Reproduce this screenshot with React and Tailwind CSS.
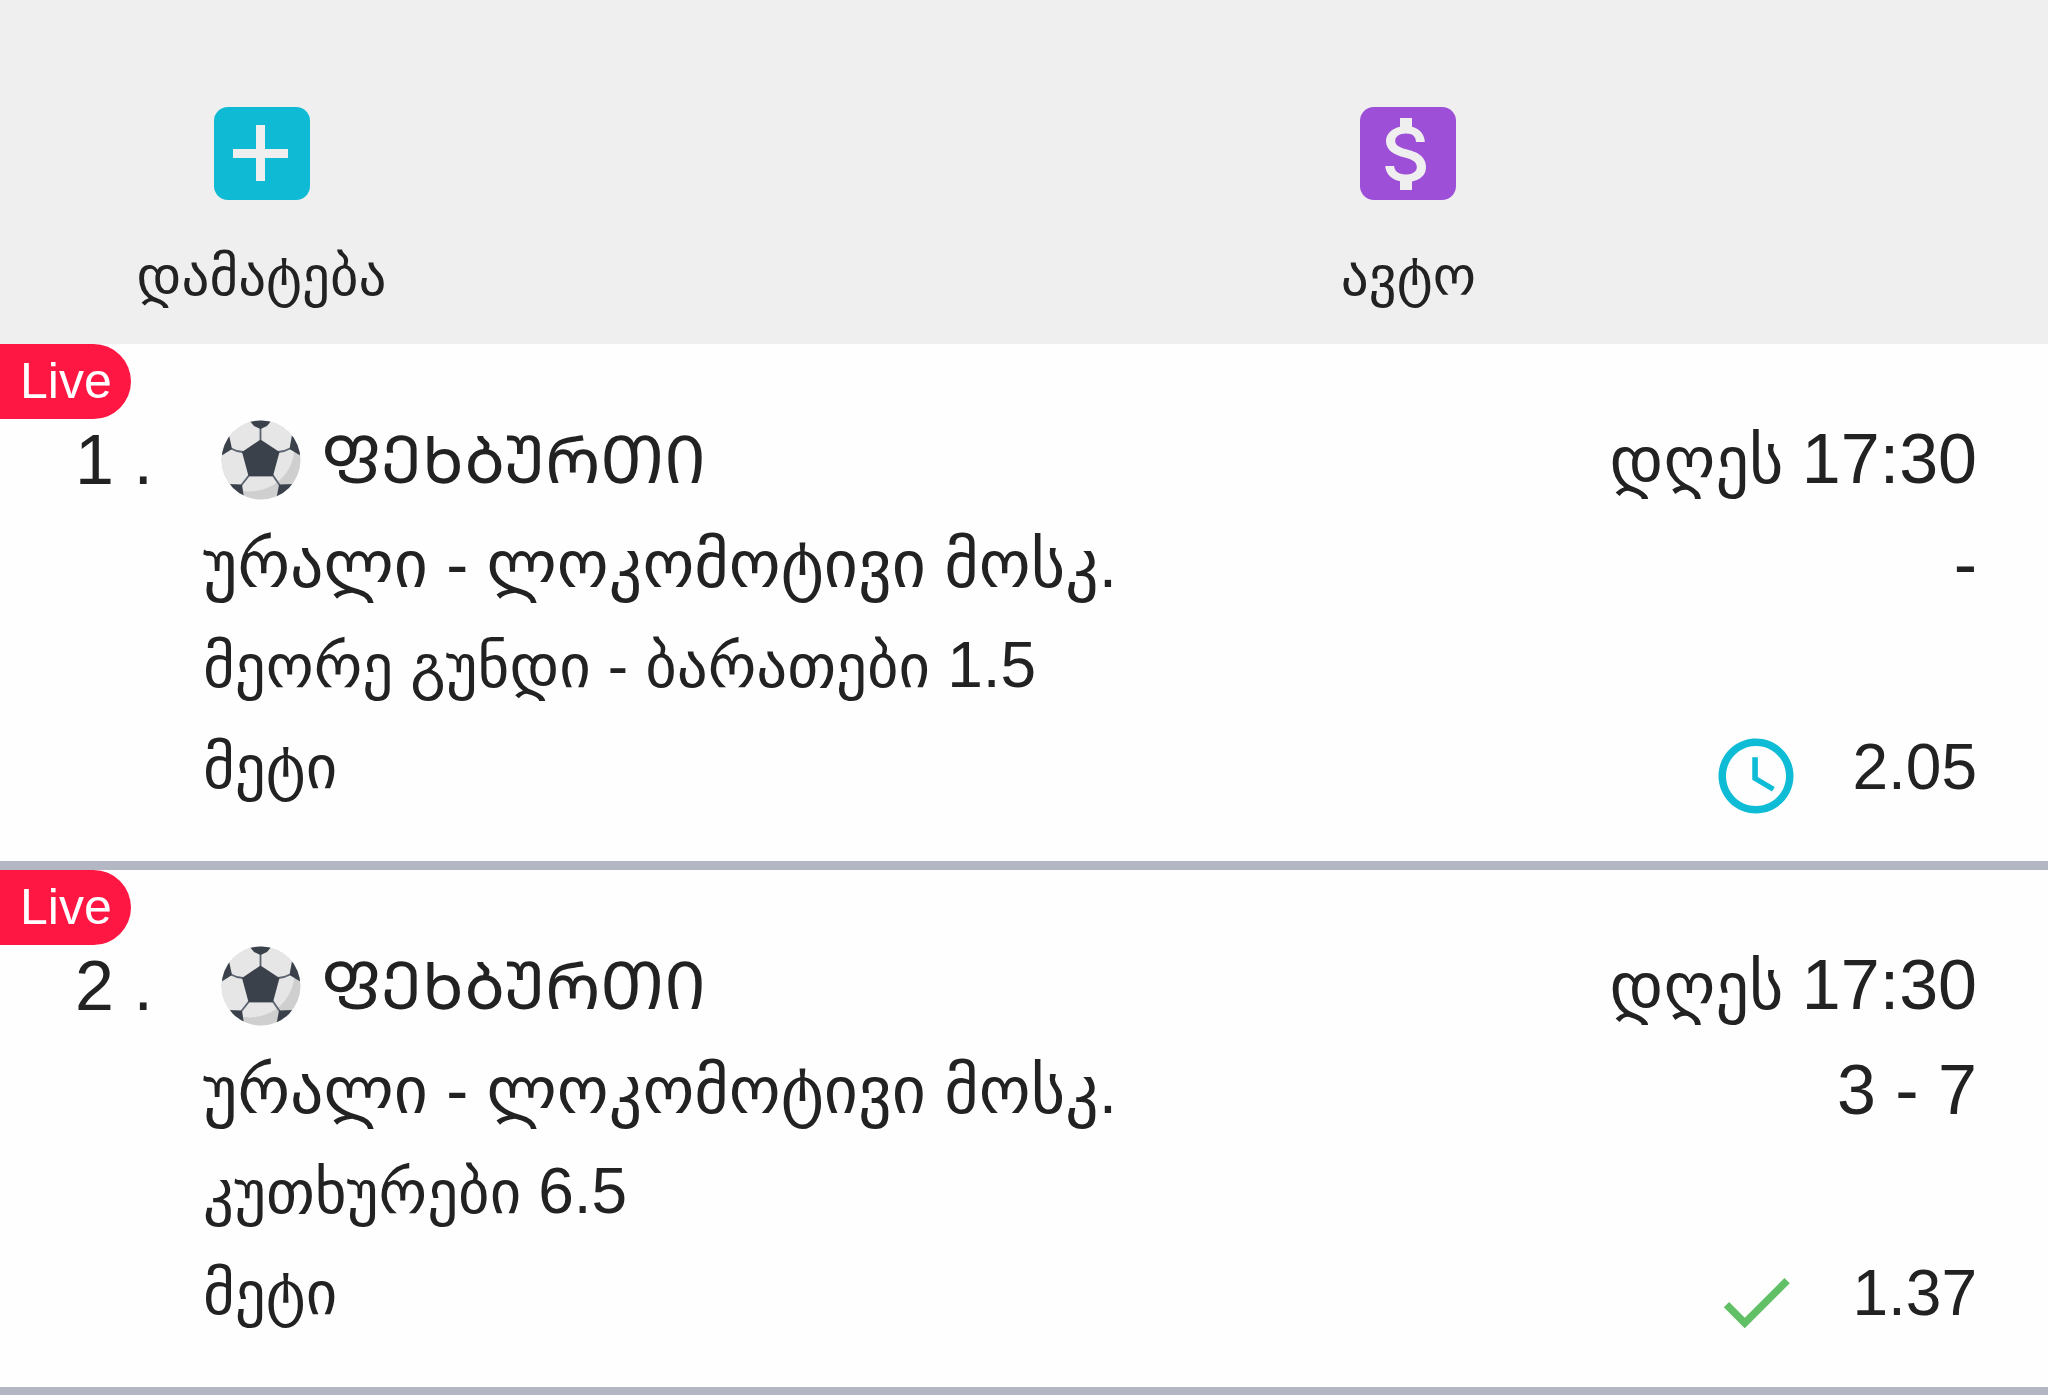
import { MdAccessTime, MdAttachMoney, MdCheck } from 'react-icons/md';

const bets = [
  {
    id: 1,
    sport: 'ᲤᲔᲮᲑᲣᲠᲗᲘ',
    day: 'დღეს',
    time: '17:30',
    teams: 'ურალი - ლოკომოტივი მოსკ.',
    score: '-',
    market: 'მეორე გუნდი - ბარათები',
    line: '1.5',
    pick: 'მეტი',
    odds: '2.05',
    status: 'pending',
  },
  {
    id: 2,
    sport: 'ᲤᲔᲮᲑᲣᲠᲗᲘ',
    day: 'დღეს',
    time: '17:30',
    teams: 'ურალი - ლოკომოტივი მოსკ.',
    score: '3 - 7',
    market: 'კუთხურები',
    line: '6.5',
    pick: 'მეტი',
    odds: '1.37',
    status: 'won',
  },
];

const PlusIcon = () => (
  <svg viewBox="0 0 96 93" className="w-24 h-[93px]" fill="#efefef" aria-hidden="true">
    <rect x="19" y="42" width="55" height="9" />
    <rect x="42" y="18" width="9" height="56" />
  </svg>
);

const SoccerBall = () => (
  <svg viewBox="0 0 80 80" className="w-20 h-20 shrink-0" aria-hidden="true">
    <defs>
      <clipPath id="ball">
        <circle cx="40" cy="40" r="39.5" />
      </clipPath>
    </defs>
    <g clipPath="url(#ball)">
      <rect width="80" height="80" fill="#cfcfcf" />
      <circle cx="29" cy="27" r="44.5" fill="#e6e6e6" />
      <g stroke="#5b6470" strokeWidth="1.8" fill="none">
        <path d="M39.5 8V20" />
        <path d="M10 28.5Q15 31.5 22 32" />
        <path d="M69 28.5Q64 31.5 57 32" />
        <path d="M20.5 65L28 55.5H52L58.5 65" />
      </g>
      <g fill="#3a414b">
        <path d="M39.5 19.5L58.5 32L52 56H27.5L21 32Z" />
        <path d="M28 0H51L46 6L39.5 9L33 6Z" />
        <path d="M8 15L11 29L0 36V15Z" />
        <path d="M71 15L68.5 29L80 36V15Z" />
        <path d="M6 64L21 64.5L23 78L8 80Z" />
        <path d="M73 64L58 64.5L55.5 78L72 80Z" />
      </g>
    </g>
  </svg>
);

const StatusIcon = ({ status }) =>
  status === 'won'
    ? <MdCheck className="w-[90px] h-[90px] text-[#61c065]" />
    : <MdAccessTime className="w-[90px] h-[90px] text-[#0fbcd6]" />;

const HeaderAction = ({ label, color, children }) => (
  <button type="button" className="w-[523px] flex flex-col items-center gap-9">
    <span className={`w-24 h-[93px] rounded-[14px] flex items-center justify-center ${color}`}>
      {children}
    </span>
    <span className="text-[55px] leading-[80px]">{label}</span>
  </button>
);

const BetRow = ({ bet }) => (
  <li className="relative flex pt-16 pb-[43px] pr-[71px] border-b-[9px] border-[#b2b7c3]">
    <span className="absolute left-0 top-0 w-[131px] pl-5 rounded-r-full bg-[#ff1744] text-white text-[50px] leading-[75px]">
      Live
    </span>
    <div className="w-[203px] shrink-0 pl-[75px] text-[70px] leading-[104px] whitespace-nowrap">
      {bet.id} .
    </div>
    <div className="flex-1 min-w-0">
      <div className="flex items-center justify-between h-[104px] text-[66px] leading-[104px]">
        <div className="flex items-center gap-5 pl-[18px]">
          <SoccerBall />
          <span>{bet.sport}</span>
        </div>
        <div>
          {bet.day} <span className="text-[70px] leading-none">{bet.time}</span>
        </div>
      </div>
      <div className="flex justify-between h-[104px] text-[66px] leading-[104px]">
        <div>{bet.teams}</div>
        <div className="text-[70px]">{bet.score}</div>
      </div>
      <div className="h-[100px] text-[61px] leading-[100px]">
        {bet.market} <span className="text-[64px] leading-none">{bet.line}</span>
      </div>
      <div className="flex justify-between h-[102px] text-[61px] leading-[102px]">
        <div>{bet.pick}</div>
        <div className="flex items-start gap-[51px] text-[64px]">
          <span className="pt-[15px]">
            <StatusIcon status={bet.status} />
          </span>
          <span>{bet.odds}</span>
        </div>
      </div>
    </div>
  </li>
);

export default function App() {
  return (
    <div className="min-h-screen overflow-hidden bg-[#fefefe] text-[#222222] font-['Liberation_Sans','DejaVu_Sans',sans-serif]">
      <header className="grid grid-cols-[56%_44%] pt-[107px] pb-7 bg-[#efefef]">
        <HeaderAction label="დამატება" color="bg-[#0fbad4]">
          <PlusIcon />
        </HeaderAction>
        <HeaderAction label="ავტო" color="bg-[#9e4fd8]">
          <MdAttachMoney className="w-24 h-24 text-[#efefef]" />
        </HeaderAction>
      </header>
      <ul>
        {bets.map(bet => <BetRow key={bet.id} bet={bet} />)}
      </ul>
    </div>
  );
}
